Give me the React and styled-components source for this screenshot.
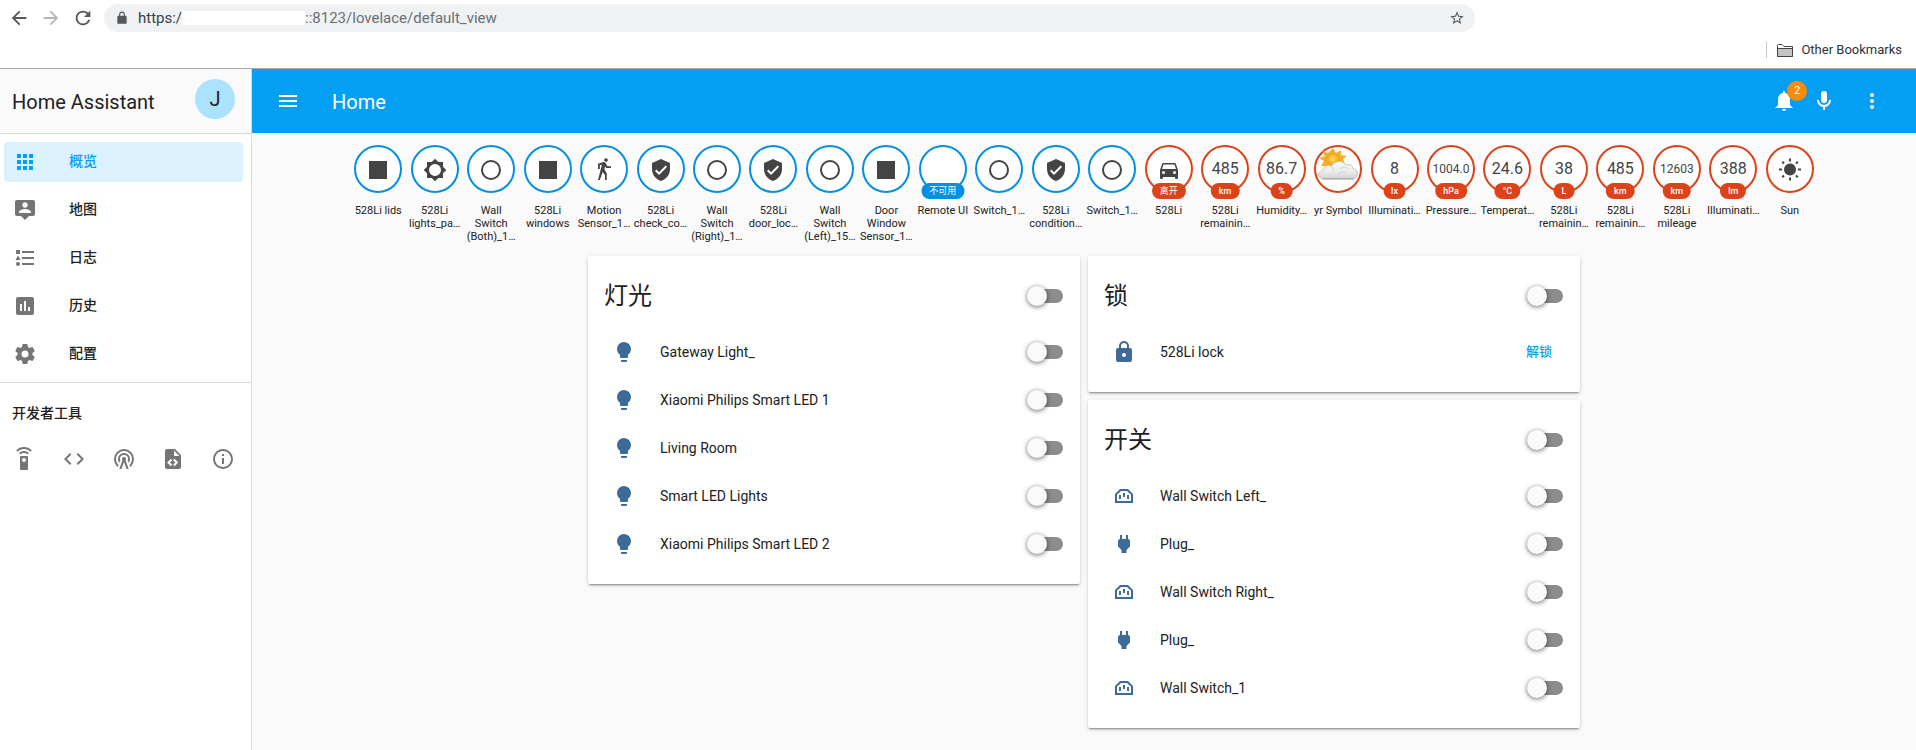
import React from 'react';
import styled, { createGlobalStyle } from 'styled-components';

const GlobalStyle = createGlobalStyle`
  * { box-sizing: border-box; }
  body { margin: 0; background: #fafafa; }
  body, button, input {
    font-family: Roboto, "Noto Sans CJK SC", sans-serif;
    color: #212121;
  }
  button { border: 0; padding: 0; background: none; cursor: pointer; }
  a { color: inherit; text-decoration: none; }
  h1, h2, h3, p, ul { margin: 0; padding: 0; font-weight: 400; list-style: none; }
`;

const paths = {
  back: 'M20,11V13H8L13.5,18.5L12.08,19.92L4.16,12L12.08,4.08L13.5,5.5L8,11H20Z',
  forward: 'M4,11V13H16L10.5,18.5L11.92,19.92L19.84,12L11.92,4.08L10.5,5.5L16,11H4Z',
  reload: 'M17.65,6.35C16.2,4.9 14.21,4 12,4A8,8 0 0,0 4,12A8,8 0 0,0 12,20C15.73,20 18.84,17.45 19.73,14H17.65C16.83,16.33 14.61,18 12,18A6,6 0 0,1 6,12A6,6 0 0,1 12,6C13.66,6 15.14,6.69 16.22,7.78L13,11H20V4L17.65,6.35Z',
  star: 'M12,15.39L8.24,17.66L9.23,13.38L5.91,10.5L10.29,10.13L12,6.09L13.71,10.13L18.09,10.5L14.77,13.38L15.76,17.66M22,9.24L14.81,8.63L12,2L9.19,8.63L2,9.24L7.45,13.97L5.82,21L12,17.27L18.18,21L16.54,13.97L22,9.24Z',
  apps: 'M16,20H20V16H16M16,14H20V10H16M10,8H14V4H10M16,8H20V4H16M10,14H14V10H10M4,14H8V10H4M4,20H8V16H4M10,20H14V16H10M4,8H8V4H4V8Z',
  map: 'M20,2H4A2,2 0 0,0 2,4V16A2,2 0 0,0 4,18H8L12,22L16,18H20A2,2 0 0,0 22,16V4A2,2 0 0,0 20,2M12,4.3C13.5,4.3 14.7,5.5 14.7,7C14.7,8.5 13.5,9.7 12,9.7C10.5,9.7 9.3,8.5 9.3,7C9.3,5.5 10.5,4.3 12,4.3M18,15H6V14.1C6,12.1 10,11 12,11C14,11 18,12.1 18,14.1V15Z',
  list: 'M5,9.5L7.5,14H2.5L5,9.5M3,4H7V8H3V4M5,20A2,2 0 0,0 7,18A2,2 0 0,0 5,16A2,2 0 0,0 3,18A2,2 0 0,0 5,20M9,5V7H21V5H9M9,19H21V17H9V19M9,13H21V11H9V13Z',
  poll: 'M17,17H15V13H17M13,17H11V7H13M9,17H7V10H9M19,3H5A2,2 0 0,0 3,5V19A2,2 0 0,0 5,21H19A2,2 0 0,0 21,19V5A2,2 0 0,0 19,3Z',
  settings: 'M12,15.5A3.5,3.5 0 0,1 8.5,12A3.5,3.5 0 0,1 12,8.5A3.5,3.5 0 0,1 15.5,12A3.5,3.5 0 0,1 12,15.5M19.43,12.97C19.47,12.65 19.5,12.33 19.5,12C19.5,11.67 19.47,11.34 19.43,11L21.54,9.37C21.73,9.22 21.78,8.95 21.66,8.73L19.66,5.27C19.54,5.05 19.27,4.96 19.05,5.05L16.56,6.05C16.04,5.66 15.5,5.32 14.87,5.07L14.5,2.42C14.46,2.18 14.25,2 14,2H10C9.75,2 9.54,2.18 9.5,2.42L9.13,5.07C8.5,5.32 7.96,5.66 7.44,6.05L4.95,5.05C4.73,4.96 4.46,5.05 4.34,5.27L2.34,8.73C2.21,8.95 2.27,9.22 2.46,9.37L4.57,11C4.53,11.34 4.5,11.67 4.5,12C4.5,12.33 4.53,12.65 4.57,12.97L2.46,14.63C2.27,14.78 2.21,15.05 2.34,15.27L4.34,18.73C4.46,18.95 4.73,19.03 4.95,18.95L7.44,17.94C7.96,18.34 8.5,18.68 9.13,18.93L9.5,21.58C9.54,21.82 9.75,22 10,22H14C14.25,22 14.46,21.82 14.5,21.58L14.87,18.93C15.5,18.67 16.04,18.34 16.56,17.94L19.05,18.95C19.27,19.03 19.54,18.95 19.66,18.73L21.66,15.27C21.78,15.05 21.73,14.78 21.54,14.63L19.43,12.97Z',
  remote: 'M12,0C8.96,0 6.21,1.23 4.22,3.22L5.63,4.63C7.26,3 9.5,2 12,2C14.5,2 16.74,3 18.36,4.64L19.77,3.23C17.79,1.23 15.04,0 12,0M7.05,6.05L8.46,7.46C9.37,6.56 10.62,6 12,6C13.38,6 14.63,6.56 15.54,7.46L16.95,6.05C15.68,4.78 13.93,4 12,4C10.07,4 8.32,4.78 7.05,6.05M12,15A2,2 0 0,1 10,13A2,2 0 0,1 12,11A2,2 0 0,1 14,13A2,2 0 0,1 12,15M15,9H9A1,1 0 0,0 8,10V22A1,1 0 0,0 9,23H15A1,1 0 0,0 16,22V10A1,1 0 0,0 15,9Z',
  code: 'M14.6,16.6L19.2,12L14.6,7.4L16,6L22,12L16,18L14.6,16.6M9.4,16.6L4.8,12L9.4,7.4L8,6L2,12L8,18L9.4,16.6Z',
  tower: 'M12,10A2,2 0 0,1 14,12C14,12.5 13.82,12.94 13.53,13.29L16.7,22H14.57L12,14.93L9.43,22H7.3L10.47,13.29C10.18,12.94 10,12.5 10,12A2,2 0 0,1 12,10M12,8A4,4 0 0,0 8,12C8,12.5 8.1,13 8.28,13.46L7.4,15.86C6.53,14.81 6,13.47 6,12A6,6 0 0,1 12,6A6,6 0 0,1 18,12C18,13.47 17.47,14.81 16.6,15.86L15.72,13.46C15.9,13 16,12.5 16,12A4,4 0 0,0 12,8M12,4A8,8 0 0,0 4,12C4,14.36 5,16.5 6.64,17.94L5.92,19.94C3.54,18.11 2,15.23 2,12A10,10 0 0,1 12,2A10,10 0 0,1 22,12C22,15.23 20.46,18.11 18.08,19.94L17.36,17.94C19,16.5 20,14.36 20,12A8,8 0 0,0 12,4Z',
  file: 'M13,9H18.5L13,3.5V9M6,2H14L20,8V20A2,2 0 0,1 18,22H6C4.89,22 4,21.1 4,20V4C4,2.89 4.89,2 6,2M6.12,15.5L9.86,19.24L11.28,17.83L8.95,15.5L11.28,13.17L9.86,11.76L6.12,15.5M17.28,15.5L13.54,11.76L12.12,13.17L14.45,15.5L12.12,17.83L13.54,19.24L17.28,15.5Z',
  info: 'M11,9H13V7H11M12,20C7.59,20 4,16.41 4,12C4,7.59 7.59,4 12,4C16.41,4 20,7.59 20,12C20,16.41 16.41,20 12,20M12,2A10,10 0 0,0 2,12A10,10 0 0,0 12,22A10,10 0 0,0 22,12A10,10 0 0,0 12,2M11,17H13V11H11V17Z',
  bulb: 'M12,2A7,7 0 0,0 5,9C5,11.38 6.19,13.47 8,14.74V17A1,1 0 0,0 9,18H15A1,1 0 0,0 16,17V14.74C17.81,13.47 19,11.38 19,9A7,7 0 0,0 12,2M9,21A1,1 0 0,0 10,22H14A1,1 0 0,0 15,21V20H9V21Z',
  lock: 'M12,17A2,2 0 0,0 14,15C14,13.89 13.1,13 12,13A2,2 0 0,0 10,15A2,2 0 0,0 12,17M18,8A2,2 0 0,1 20,10V20A2,2 0 0,1 18,22H6A2,2 0 0,1 4,20V10C4,8.89 4.9,8 6,8H7V6A5,5 0 0,1 12,1A5,5 0 0,1 17,6V8H18M12,3A3,3 0 0,0 9,6V8H15V6A3,3 0 0,0 12,3Z',
  padlock: 'M18,8A2,2 0 0,1 20,10V20A2,2 0 0,1 18,22H6A2,2 0 0,1 4,20V10C4,8.89 4.9,8 6,8H7V6A5,5 0 0,1 12,1A5,5 0 0,1 17,6V8H18M12,3A3,3 0 0,0 9,6V8H15V6A3,3 0 0,0 12,3Z',
  shield: 'M10,17L6,13L7.41,11.59L10,14.17L16.59,7.58L18,9M12,1L3,5V11C3,16.55 6.84,21.74 12,23C17.16,21.74 21,16.55 21,11V5L12,1Z',
  plug: 'M16,7V3H14V7H10V3H8V7H8C7,7 6,8 6,9V14.5L9.5,18V21H14.5V18L18,14.5V9C18,8 17,7 16,7Z',
  socket: 'M15,15H17V11H15V15M7,15H9V11H7V15M11,13H13V9H11V13M8.83,7L5,10.83V17H19V10.83L15.17,7H8.83M8,5H16L21,10V19H3V10L8,5Z',
  brightness: 'M12,18A6,6 0 0,1 6,12A6,6 0 0,1 12,6A6,6 0 0,1 18,12A6,6 0 0,1 12,18M20,15.31L23.31,12L20,8.69V4H15.31L12,0.69L8.69,4H4V8.69L0.69,12L4,15.31V20H8.69L12,23.31L15.31,20H20V15.31Z',
  blank: 'M12,20A8,8 0 0,1 4,12A8,8 0 0,1 12,4A8,8 0 0,1 20,12A8,8 0 0,1 12,20M12,2A10,10 0 0,0 2,12A10,10 0 0,0 12,22A10,10 0 0,0 22,12A10,10 0 0,0 12,2Z',
  square: 'M3,3V21H21V3Z',
  walk: 'M14.12,10H19V8.2H15.38L13.38,4.87C13.08,4.37 12.54,4.03 11.92,4.03C11.74,4.03 11.58,4.06 11.42,4.11L6,5.8V11H7.8V7.33L9.91,6.67L6,22H7.8L10.67,13.89L13,17V22H14.8V15.59L12.31,11.05L13.04,8.18M14,3.8C15,3.8 15.8,3 15.8,2C15.8,1 15,0.2 14,0.2C13,0.2 12.2,1 12.2,2C12.2,3 13,3.8 14,3.8Z',
  car: 'M5,11L6.5,6.5H17.5L19,11M17.5,16A1.5,1.5 0 0,1 16,14.5A1.5,1.5 0 0,1 17.5,13A1.5,1.5 0 0,1 19,14.5A1.5,1.5 0 0,1 17.5,16M6.5,16A1.5,1.5 0 0,1 5,14.5A1.5,1.5 0 0,1 6.5,13A1.5,1.5 0 0,1 8,14.5A1.5,1.5 0 0,1 6.5,16M18.92,6C18.72,5.42 18.16,5 17.5,5H6.5C5.84,5 5.28,5.42 5.08,6L3,12V20A1,1 0 0,0 4,21H5A1,1 0 0,0 6,20V19H18V20A1,1 0 0,0 19,21H20A1,1 0 0,0 21,20V12L18.92,6Z',
  sun: 'M3.55,18.54L4.96,19.95L6.76,18.16L5.34,16.74M11,22.45C11.32,22.45 13,22.45 13,22.45V19.5H11M12,5.5A6,6 0 0,0 6,11.5A6,6 0 0,0 12,17.5A6,6 0 0,0 18,11.5C18,8.18 15.31,5.5 12,5.5M20,12.5H23V10.5H20M17.24,18.16L19.04,19.95L20.45,18.54L18.66,16.74M20.45,4.46L19.04,3.05L17.24,4.84L18.66,6.26M13,0.55H11V3.5H13M4,10.5H1V12.5H4M6.76,4.84L4.96,3.05L3.55,4.46L5.34,6.26L6.76,4.84Z',
  menu: 'M3,6H21V8H3V6M3,11H21V13H3V11M3,16H21V18H3V16Z',
  bell: 'M14,20A2,2 0 0,1 12,22A2,2 0 0,1 10,20H14M12,2A1,1 0 0,1 13,3V4.08C15.84,4.56 18,7.03 18,10V16L21,19H3L6,16V10C6,7.03 8.16,4.56 11,4.08V3A1,1 0 0,1 12,2Z',
  mic: 'M12,2A3,3 0 0,1 15,5V11A3,3 0 0,1 12,14A3,3 0 0,1 9,11V5A3,3 0 0,1 12,2M19,11C19,14.53 16.39,17.44 13,17.93V21H11V17.93C7.61,17.44 5,14.53 5,11H7A5,5 0 0,0 12,16A5,5 0 0,0 17,11H19Z',
  dots: 'M12,16A2,2 0 0,1 14,18A2,2 0 0,1 12,20A2,2 0 0,1 10,18A2,2 0 0,1 12,16M12,10A2,2 0 0,1 14,12A2,2 0 0,1 12,14A2,2 0 0,1 10,12A2,2 0 0,1 12,10M12,4A2,2 0 0,1 14,6A2,2 0 0,1 12,8A2,2 0 0,1 10,6A2,2 0 0,1 12,4Z',
};

const Svg = styled.svg`
  display: block;
  flex: none;
  fill: currentColor;
`;

function Icon({ name, size = 24 }) {
  return (
    <Svg width={size} height={size} viewBox="0 0 24 24" aria-hidden="true">
      <path fillRule="evenodd" d={paths[name]} />
    </Svg>
  );
}

function FolderIcon() {
  return (
    <Svg width="16" height="13" viewBox="0 0 16 13" aria-hidden="true">
      <path d="M0.5,12.5V1.5Q0.5,0.5 1.5,0.5H5L7,2.5H15.5V12.5Z" fill="#fff" stroke="#444" />
      <path d="M0.5,4.5H15.5V12.5H0.5Z" fill="#c4c4c4" stroke="#444" />
    </Svg>
  );
}

function PartlyCloudyIcon() {
  return (
    <Svg width="44" height="44" viewBox="0 0 44 44" aria-hidden="true">
      <defs>
        <linearGradient id="cloud" x1="0" y1="0" x2="0" y2="1">
          <stop offset="0" stopColor="#f8f8f8" />
          <stop offset="0.6" stopColor="#ececec" />
          <stop offset="1" stopColor="#d2d2d2" />
        </linearGradient>
        <radialGradient id="sunshine">
          <stop offset="0" stopColor="#ffd95c" />
          <stop offset="1" stopColor="#f5a91c" />
        </radialGradient>
      </defs>
      <path
        fill="#f8ae2b"
        d="M17,1L20,6L25,3L25,8L31,9L27,12L29,17L24,17L18,21L12,19L5,19L8,14L3,11L9,9L6,4L12,6Z"
      />
      <circle cx="17" cy="12" r="6" fill="url(#sunshine)" stroke="#ec9c18" strokeWidth="0.6" />
      <path
        fill="url(#cloud)"
        stroke="#bdbdbd"
        strokeWidth="0.8"
        d="M7,31.5C1,31 1,24.500 7,23.500C7,18.500 13,17.500 15.500,19.500C17,14 27,12.500 30,18C34,16.500 37.500,19 37,21.500C43,22.500 43,31 37,31.500Z"
      />
      <path fill="none" stroke="#d4d4d4" d="M15,20Q18,21 18,24M24,22Q28,18 32,22M22,27Q26,23 30,26" />
      <path fill="none" stroke="#9c9c9c" d="M6,32H38" />
    </Svg>
  );
}

/* Browser chrome */

const Browser = styled.header`
  background: #fff;
  border-bottom: 1px solid #a9a9a9;
`;

const AddressRow = styled.div`
  display: flex;
  align-items: center;
  gap: 10px;
  height: 32px;
  padding: 4px 441px 0 8px;
`;

const NavButton = styled.button`
  color: ${(p) => (p.disabled ? '#b3b5b8' : '#54575b')};
`;

const AddressBar = styled.div`
  display: flex;
  flex: 1;
  align-items: center;
  height: 28px;
  padding: 0 10px 0 11px;
  border-radius: 14px;
  background: #eff1f3;
  color: #54575b;
`;

const Url = styled.div`
  display: flex;
  flex: 1;
  align-items: center;
  margin-left: 9px;
  font-size: 15px;
  line-height: 20px;
  color: #6c7075;
`;

const Scheme = styled.span`
  color: #3a3d41;
`;

const Redacted = styled.span`
  width: 123px;
  height: 14px;
  background: #fff;
`;

const BookmarksRow = styled.div`
  display: flex;
  align-items: center;
  justify-content: flex-end;
  height: 36px;
  padding: 0 14px;
`;

const Bookmarks = styled.button`
  display: flex;
  align-items: center;
  gap: 8px;
  height: 16px;
  padding-left: 10px;
  border-left: 1px solid #c3c6ca;
  font-size: 13px;
  line-height: 16px;
  color: #303236;
`;

/* Home Assistant shell */

const Shell = styled.div`
  display: flex;
  min-height: calc(100vh - 69px);
`;

const Sidebar = styled.aside`
  flex: none;
  width: 252px;
  border-right: 1px solid #d9d9d9;
  background: #fff;
`;

const SidebarHeader = styled.div`
  display: flex;
  align-items: flex-start;
  justify-content: space-between;
  height: 65px;
  padding: 10px 16px 0 12px;
  border-bottom: 1px solid #d9d9d9;
  background: #fafafa;
`;

const SidebarTitle = styled.h1`
  font-size: 20px;
  line-height: 46px;
`;

const Avatar = styled.button`
  width: 40px;
  height: 40px;
  border-radius: 50%;
  background: #abe2ff;
  font-size: 20px;
  line-height: 40px;
`;

const Menu = styled.nav`
  display: flex;
  flex-direction: column;
  gap: 8px;
  padding: 8px 8px 8px 4px;
  border-bottom: 1px solid #d9d9d9;
`;

const MenuLink = styled.a`
  display: flex;
  align-items: center;
  gap: 32px;
  height: 40px;
  padding: 0 9px;
  border-radius: 4px;
  background: ${(p) => (p.$active ? '#dbf2fe' : 'none')};
  font-size: 14px;
  font-weight: 500;
  color: ${(p) => (p.$active ? '#039ff3' : '#212121')};

  svg { color: ${(p) => (p.$active ? '#039ff3' : '#757575')}; }
`;

const MenuText = styled.span`
  padding-bottom: 2px;
  line-height: 20px;
`;

const ToolsTitle = styled.h2`
  padding: 20px 12px 0;
  font-size: 14px;
  font-weight: 500;
  line-height: 20px;
`;

const Tools = styled.div`
  display: flex;
  justify-content: space-between;
  padding: 16px 12px 16px 8px;
  color: #757575;
`;

const IconButton = styled.button`
  display: grid;
  place-items: center;
  width: ${(p) => p.$size || 40}px;
  height: 40px;
  color: inherit;
`;

const Main = styled.main`
  flex: 1;
  min-width: 0;
`;

const AppBar = styled.div`
  display: flex;
  align-items: center;
  height: 64px;
  padding: 0 24px 0 16px;
  background: #039ff3;
  color: #fff;
`;

const AppTitle = styled.h2`
  flex: 1;
  padding: 2px 0 0 24px;
  font-size: 20px;
  line-height: 24px;
`;

const Actions = styled.div`
  display: flex;

  > :last-child { margin-left: 8px; }
`;

const Notifications = styled.div`
  position: relative;
`;

const Count = styled.span`
  position: absolute;
  top: 0;
  right: -3px;
  width: 20px;
  height: 20px;
  border-radius: 50%;
  background: #ff8c00;
  font-size: 11px;
  line-height: 19px;
  text-align: center;
  pointer-events: none;
`;

/* State badges */

const Badges = styled.ul`
  display: grid;
  grid-template-columns: repeat(26, 1fr);
  max-width: 1468px;
  margin: 0 auto;
  padding-top: 12px;
`;

const BadgeItem = styled.li`
  display: flex;
  flex-direction: column;
  align-items: center;
  min-width: 0;
  height: 106px;
`;

const Circle = styled.div`
  position: relative;
  display: grid;
  place-items: center;
  width: 48px;
  height: 48px;
  border: 2px solid ${(p) => p.$color};
  border-radius: 50%;
  background: #fff;
  font-size: ${(p) => (p.$small ? 12 : 16)}px;
  line-height: 20px;
  color: #444;
`;

const BadgeIcon = styled.div`
  padding-top: 2px;
`;

const Pill = styled.span`
  position: absolute;
  bottom: -8px;
  left: 50%;
  transform: translateX(-50%);
  padding: 0 8px;
  border-radius: 8px;
  background: ${(p) => p.$color};
  font-size: 9px;
  font-weight: ${(p) => (p.$cjk ? 400 : 500)};
  line-height: 16px;
  white-space: nowrap;
  color: #fff;
`;

const BadgeLabel = styled.p`
  margin-top: 11px;
  font-size: 11px;
  line-height: 13px;
  text-align: center;
  white-space: pre;
`;

/* Cards */

const Board = styled.div`
  display: flex;
  align-items: flex-start;
  justify-content: center;
  gap: 8px;
  padding: 5px 8px 16px;
`;

const Column = styled.div`
  display: flex;
  flex: 0 1 492px;
  flex-direction: column;
  gap: 8px;
`;

const CardBox = styled.section`
  padding-bottom: 16px;
  border-radius: 2px;
  background: #fff;
  box-shadow: 0 2px 2px 0 rgba(0, 0, 0, 0.14), 0 1px 5px 0 rgba(0, 0, 0, 0.12),
    0 3px 1px -2px rgba(0, 0, 0, 0.2);
`;

const CardHeader = styled.div`
  display: flex;
  align-items: center;
  justify-content: space-between;
  height: 72px;
  padding: 8px 17px 0 16px;
`;

const CardTitle = styled.h3`
  font-size: 24px;
  line-height: 32px;
`;

const Row = styled.div`
  display: flex;
  align-items: center;
  height: 48px;
  padding: 0 17px 0 24px;
  color: #3d6a98;
`;

const RowLabel = styled.label`
  flex: 1;
  padding-left: 24px;
  font-size: 14px;
  line-height: 20px;
  color: #212121;
`;

const Toggle = styled.input.attrs({ type: 'checkbox' })`
  appearance: none;
  display: flex;
  align-items: center;
  width: 34px;
  height: 14px;
  margin: 0;
  border-radius: 7px;
  background: #8c8c8c;
  cursor: pointer;

  &::before {
    content: '';
    flex: none;
    width: 20px;
    height: 20px;
    margin-left: -2px;
    border-radius: 50%;
    background: #fafafa;
    box-shadow: 0 1px 5px 0 rgba(0, 0, 0, 0.6);
  }

  &:checked::before { margin-left: 16px; background: #039ff3; }
`;

const TextButton = styled.button`
  margin-right: 11px;
  font-size: 13px;
  font-weight: 500;
  line-height: 20px;
  color: #039ff3;
`;

const BLUE = '#038fe2';
const RED = '#dd431a';

const badges = [
  { label: '528Li lids', icon: 'square' },
  { label: '528Li\nlights_pa…', icon: 'brightness' },
  { label: 'Wall\nSwitch\n(Both)_1…', icon: 'blank' },
  { label: '528Li\nwindows', icon: 'square' },
  { label: 'Motion\nSensor_1…', icon: 'walk' },
  { label: '528Li\ncheck_co…', icon: 'shield' },
  { label: 'Wall\nSwitch\n(Right)_1…', icon: 'blank' },
  { label: '528Li\ndoor_loc…', icon: 'shield' },
  { label: 'Wall\nSwitch\n(Left)_15…', icon: 'blank' },
  { label: 'Door\nWindow\nSensor_1…', icon: 'square' },
  { label: 'Remote UI', unit: '不可用', cjk: true },
  { label: 'Switch_1…', icon: 'blank' },
  { label: '528Li\ncondition…', icon: 'shield' },
  { label: 'Switch_1…', icon: 'blank' },
  { label: '528Li', icon: 'car', unit: '离开', cjk: true, red: true },
  { label: '528Li\nremainin…', value: '485', unit: 'km', red: true },
  { label: 'Humidity…', value: '86.7', unit: '%', red: true },
  { label: 'yr Symbol', weather: true, red: true },
  { label: 'Illuminati…', value: '8', unit: 'lx', red: true },
  { label: 'Pressure…', value: '1004.0', unit: 'hPa', red: true },
  { label: 'Temperat…', value: '24.6', unit: '°C', red: true },
  { label: '528Li\nremainin…', value: '38', unit: 'L', red: true },
  { label: '528Li\nremainin…', value: '485', unit: 'km', red: true },
  { label: '528Li\nmileage', value: '12603', unit: 'km', red: true },
  { label: 'Illuminati…', value: '388', unit: 'lm', red: true },
  { label: 'Sun', icon: 'sun', red: true },
];

function Badge({ label, icon, value, unit, cjk, weather, red }) {
  const color = red ? RED : BLUE;
  return (
    <BadgeItem>
      <Circle $color={color} $small={value && value.length > 4}>
        {icon && <BadgeIcon><Icon name={icon} /></BadgeIcon>}
        {weather && <PartlyCloudyIcon />}
        {value}
        {unit && <Pill $color={color} $cjk={cjk}>{unit}</Pill>}
      </Circle>
      <BadgeLabel>{label}</BadgeLabel>
    </BadgeItem>
  );
}

function Card({ id, title, rows }) {
  return (
    <CardBox>
      <CardHeader>
        <CardTitle>{title}</CardTitle>
        <Toggle aria-label={title} />
      </CardHeader>
      {rows.map(([icon, name, action], i) => (
        <Row key={i}>
          <Icon name={icon} />
          <RowLabel htmlFor={`${id}-${i}`}>{name}</RowLabel>
          {action ? <TextButton id={`${id}-${i}`}>{action}</TextButton> : <Toggle id={`${id}-${i}`} />}
        </Row>
      ))}
    </CardBox>
  );
}

const menu = [
  ['apps', '概览'],
  ['map', '地图'],
  ['list', '日志'],
  ['poll', '历史'],
  ['settings', '配置'],
];

const tools = [
  ['remote', 'Services'],
  ['code', 'States'],
  ['tower', 'Events'],
  ['file', 'Templates'],
  ['info', 'Info'],
];

const lights = [
  ['bulb', 'Gateway Light_'],
  ['bulb', 'Xiaomi Philips Smart LED 1'],
  ['bulb', 'Living Room'],
  ['bulb', 'Smart LED Lights'],
  ['bulb', 'Xiaomi Philips Smart LED 2'],
];

const locks = [['lock', '528Li lock', '解锁']];

const switches = [
  ['socket', 'Wall Switch Left_'],
  ['plug', 'Plug_'],
  ['socket', 'Wall Switch Right_'],
  ['plug', 'Plug_'],
  ['socket', 'Wall Switch_1'],
];

export default function App() {
  return (
    <>
      <GlobalStyle />
      <Browser>
        <AddressRow>
          <NavButton aria-label="Back"><Icon name="back" size={22} /></NavButton>
          <NavButton aria-label="Forward" disabled><Icon name="forward" size={22} /></NavButton>
          <NavButton aria-label="Reload"><Icon name="reload" size={22} /></NavButton>
          <AddressBar>
            <Icon name="padlock" size={14} />
            <Url>
              <Scheme>https:/</Scheme>
              <Redacted />
              <span>::8123/lovelace/default_view</span>
            </Url>
            <NavButton aria-label="Bookmark this page"><Icon name="star" size={16} /></NavButton>
          </AddressBar>
        </AddressRow>
        <BookmarksRow>
          <Bookmarks><FolderIcon />Other Bookmarks</Bookmarks>
        </BookmarksRow>
      </Browser>
      <Shell>
        <Sidebar>
          <SidebarHeader>
            <SidebarTitle>Home Assistant</SidebarTitle>
            <Avatar>J</Avatar>
          </SidebarHeader>
          <Menu>
            {menu.map(([icon, text], i) => (
              <MenuLink key={icon} href="#" $active={i === 0}>
                <Icon name={icon} />
                <MenuText>{text}</MenuText>
              </MenuLink>
            ))}
          </Menu>
          <ToolsTitle>开发者工具</ToolsTitle>
          <Tools>
            {tools.map(([icon, name]) => (
              <IconButton key={icon} $size={32} aria-label={name}><Icon name={icon} /></IconButton>
            ))}
          </Tools>
        </Sidebar>
        <Main>
          <AppBar>
            <IconButton aria-label="Menu"><Icon name="menu" /></IconButton>
            <AppTitle>Home</AppTitle>
            <Actions>
              <Notifications>
                <IconButton aria-label="Notifications"><Icon name="bell" /></IconButton>
                <Count>2</Count>
              </Notifications>
              <IconButton aria-label="Voice"><Icon name="mic" /></IconButton>
              <IconButton aria-label="More"><Icon name="dots" /></IconButton>
            </Actions>
          </AppBar>
          <Badges>
            {badges.map((b, i) => <Badge key={i} {...b} />)}
          </Badges>
          <Board>
            <Column>
              <Card id="light" title="灯光" rows={lights} />
            </Column>
            <Column>
              <Card id="lock" title="锁" rows={locks} />
              <Card id="switch" title="开关" rows={switches} />
            </Column>
          </Board>
        </Main>
      </Shell>
    </>
  );
}
